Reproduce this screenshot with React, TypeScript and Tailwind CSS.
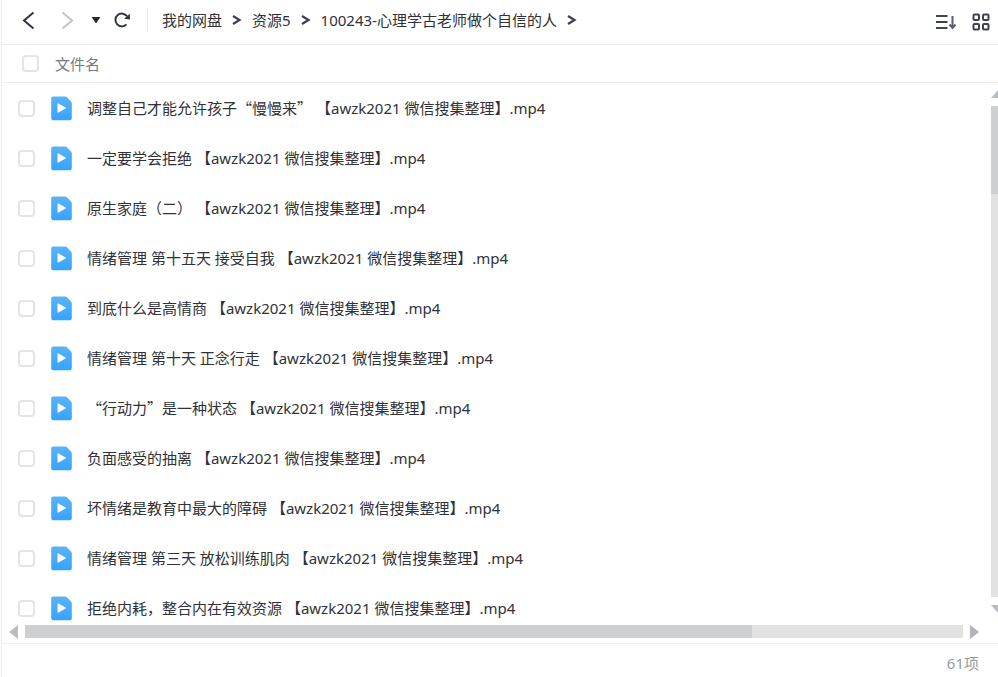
import { Fragment } from "react";

const crumbs = ["我的网盘", "资源5", "100243-心理学古老师做个自信的人"];

const files = [
  "调整自己才能允许孩子“慢慢来” 【awzk2021 微信搜集整理】.mp4",
  "一定要学会拒绝 【awzk2021 微信搜集整理】.mp4",
  "原生家庭（二） 【awzk2021 微信搜集整理】.mp4",
  "情绪管理 第十五天 接受自我 【awzk2021 微信搜集整理】.mp4",
  "到底什么是高情商 【awzk2021 微信搜集整理】.mp4",
  "情绪管理 第十天 正念行走 【awzk2021 微信搜集整理】.mp4",
  "“行动力”是一种状态 【awzk2021 微信搜集整理】.mp4",
  "负面感受的抽离 【awzk2021 微信搜集整理】.mp4",
  "坏情绪是教育中最大的障碍 【awzk2021 微信搜集整理】.mp4",
  "情绪管理 第三天 放松训练肌肉 【awzk2021 微信搜集整理】.mp4",
  "拒绝内耗，整合内在有效资源 【awzk2021 微信搜集整理】.mp4"
];

const total = 61;

// Curly quotes take the full-width form inside Chinese names
function FileName({ name }: { name: string }) {
  return (
    <>
      {name.split(/([“”])/).map((part, i) =>
        part === "“" || part === "”" ? (
          <span key={i} className="font-['Noto_Sans_CJK_SC',sans-serif]">
            {part}
          </span>
        ) : (
          <Fragment key={i}>{part}</Fragment>
        )
      )}
    </>
  );
}

function Checkbox({ id, label }: { id: string; label?: string }) {
  return (
    <input
      id={id}
      type="checkbox"
      aria-label={label}
      className="size-[17px] shrink-0 appearance-none rounded-[4px] border-2 border-[#e4e4e5] bg-white checked:border-[#3aa0fa] checked:bg-[#3aa0fa]"
    />
  );
}

function CrumbArrow() {
  return (
    <svg width="10" height="12" viewBox="0 0 10 12" fill="none" stroke="#3d414d" strokeWidth="2.200" className="shrink-0">
      <path d="M1 2 7.500 6 1 10" />
    </svg>
  );
}

function VideoIcon() {
  return (
    <svg width="21" height="25" viewBox="0 0 21 25" className="shrink-0">
      <defs>
        <linearGradient id="video" x1="0" y1="0" x2="0" y2="1">
          <stop offset="0" stopColor="#5ab3fa" />
          <stop offset="1" stopColor="#36a3fd" />
        </linearGradient>
      </defs>
      <path d="M2.5.5h11.500c1 0 1.600.3 2.200.9l3.800 4c.6.6.8 1.200.8 2v14.600c0 1.400-.9 2.300-2.300 2.300h-16C1.100 24.300.2 23.400.2 22V2.800C.2 1.400 1.100.5 2.500.5Z" fill="url(#video)" />
      <path d="M6.500 8v8c0 .6.5.9 1 .6l7-4c.5-.3.5-.9 0-1.200l-7-4c-.5-.3-1 0-1 .6Z" fill="#fff" />
    </svg>
  );
}

function Toolbar() {
  return (
    <header className="flex h-[45px] shrink-0 items-center border-b border-[#eeeeef] pr-2 pb-1 pl-[19px]">
      <button type="button" aria-label="后退" className="shrink-0">
        <svg width="14" height="20" viewBox="0 0 14 20" fill="none" stroke="#30343f" strokeWidth="2">
          <path d="M12.500 2.500 3 10.500l9.500 8" />
        </svg>
      </button>
      <button type="button" aria-label="前进" className="ml-[26px] shrink-0">
        <svg width="14" height="20" viewBox="0 0 14 20" fill="none" stroke="#c4c5c8" strokeWidth="2">
          <path d="m1.500 2.500 9.500 8-9.500 8" />
        </svg>
      </button>
      <button type="button" aria-label="历史记录" className="ml-4 shrink-0">
        <svg width="10" height="8" viewBox="0 0 10 8" fill="#262a35">
          <path d="M1.500 1h7c.5 0 .7.4.4.8L5.600 6.800c-.3.4-.9.4-1.200 0L1.100 1.800c-.3-.4-.1-.8.4-.8Z" />
        </svg>
      </button>
      <button type="button" aria-label="刷新" className="ml-3 shrink-0">
        <svg width="18" height="18" viewBox="0 0 18 18" fill="none">
          <path d="M13.500 13.400A6.400 6.400 0 1 1 14 5.200" stroke="#30343f" strokeWidth="2" />
          <path d="m16.800 2.800.2 5.800-5.900-.8Z" fill="#30343f" />
        </svg>
      </button>
      <nav aria-label="路径" className="ml-4 flex min-w-0 flex-1 items-center gap-[10px] border-l border-[#e8e8e9] pl-[14px] whitespace-nowrap">
        {crumbs.map((crumb) => (
          <Fragment key={crumb}>
            <a href="#" className="leading-6">
              {crumb}
            </a>
            <CrumbArrow />
          </Fragment>
        ))}
      </nav>
      <div className="flex shrink-0 items-center gap-[14px] pt-1">
        <button type="button" aria-label="排序">
          <svg width="22" height="18" viewBox="0 0 22 18" fill="none" stroke="#40444f" strokeWidth="2">
            <path d="M0 3h11.500M0 9h11.500M0 15h11.500" />
            <path d="M16.500 3v12M13.500 11.500l3 3.500 3-3.500" stroke="#596170" />
          </svg>
        </button>
        <button type="button" aria-label="缩略图模式">
          <svg width="18" height="18" viewBox="0 0 18 18" fill="none" stroke="#40434b" strokeWidth="2">
            <rect x="1.500" y="1.500" width="5.500" height="5.500" rx="1" />
            <rect x="11" y="1.500" width="5.500" height="5.500" rx="1" />
            <rect x="1.500" y="11" width="5.500" height="5.500" rx="1" />
            <rect x="11" y="11" width="5.500" height="5.500" rx="1" />
          </svg>
        </button>
      </div>
    </header>
  );
}

function VerticalScrollbar() {
  return (
    <div className="flex w-[7px] shrink-0 flex-col gap-2 overflow-hidden pt-[7px] pb-3">
      <svg width="14" height="8" viewBox="0 0 14 8" className="shrink-0">
        <path d="M0 8 7 0l7 8Z" fill="#b9bdc1" />
      </svg>
      <div className="min-h-0 flex-1 bg-[#e2e2e2]">
        <div className="h-[18%] bg-[#cdcfd1]" />
      </div>
      <svg width="14" height="8" viewBox="0 0 14 8" className="shrink-0">
        <path d="m0 0 7 8 7-8Z" fill="#b9bdc1" />
      </svg>
    </div>
  );
}

function HorizontalScrollbar() {
  return (
    <div className="flex h-[18px] shrink-0 gap-[7px] pr-[19px] pl-[7px]">
      <svg width="9" height="14" viewBox="0 0 9 14" className="shrink-0">
        <path d="M9 0v14L0 7Z" fill="#b9bdc1" />
      </svg>
      <div className="h-[13px] min-w-0 flex-1 bg-[#e2e2e2]">
        <div className="h-full w-[77.5%] bg-[#cdcfd1]" />
      </div>
      <svg width="9" height="14" viewBox="0 0 9 14" className="shrink-0">
        <path d="M0 0v14l9-7Z" fill="#b0b4b8" />
      </svg>
    </div>
  );
}

export default function App() {
  return (
    <div
      lang="zh-CN"
      className="flex h-screen flex-col overflow-hidden bg-white pl-px font-['Noto_Sans','Noto_Sans_CJK_SC',sans-serif] text-[15px] text-[#303237]"
    >
      <div className="flex min-h-0 flex-1 flex-col border-l border-[#eeeeef]">
        <Toolbar />
        <div className="flex h-[38px] shrink-0 items-center gap-4 border-b border-[#f0f0f1] pl-5">
          <Checkbox id="select-all" label="全选" />
          <span className="leading-6 text-[#77797e]">文件名</span>
        </div>

        <main className="flex min-h-0 flex-1">
          <ul className="min-w-0 flex-1 overflow-hidden">
            {files.map((name, i) => (
              <li key={name} className="flex h-[50px] items-center pl-4">
                <Checkbox id={`file-${i}`} />
                <label htmlFor={`file-${i}`} className="ml-4 flex items-center gap-[15px] whitespace-nowrap">
                  <VideoIcon />
                  <span className="leading-6">
                    <FileName name={name} />
                  </span>
                </label>
              </li>
            ))}
          </ul>
          <VerticalScrollbar />
        </main>
        <HorizontalScrollbar />

        <footer className="flex h-[34px] shrink-0 items-center justify-end border-t border-[#f0f0f1] pt-[6px] pr-[19px] text-[#97999e]">
          {total}项
        </footer>
      </div>
    </div>
  );
}
